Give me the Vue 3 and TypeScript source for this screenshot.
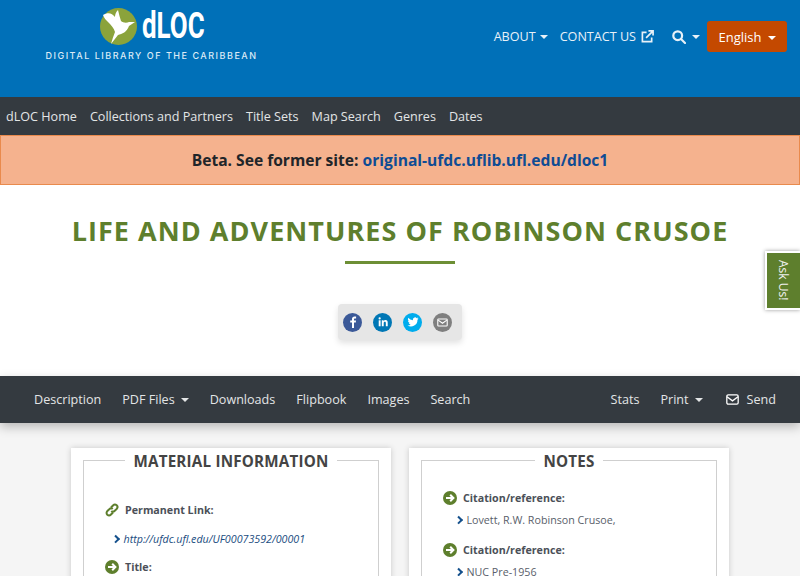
<template>
  <div class="page">
    <header class="top">
      <a class="logo">
        <div class="logo-mark">
          <svg width="37" height="37" viewBox="0 0 37 37">
            <circle cx="18.5" cy="18.5" r="18.5" fill="#8ba33b" />
            <path d="M3 7 C8 4 12 5 15 9 C15 6 16 4 18 2 C19 6 20 10 21 13 C23 15 27 15 29 14 L35 14 L29 18 C27 24 22 26 18 27 L11 36 C12 32 13.500 28 15 24 C14 20 11 17 8 14 C6 12 4 10 3 7 Z" fill="#fff" />
          </svg>
          <span class="logo-name">dLOC</span>
        </div>
        <div class="logo-sub">DIGITAL LIBRARY OF THE CARIBBEAN</div>
      </a>
      <nav class="top-links">
        <a class="top-link">ABOUT<i class="caret" /></a>
        <a class="top-link">CONTACT US
          <svg class="ext" width="13" height="13" viewBox="0 0 14 14" fill="none" stroke="#e8f1f8" stroke-width="1.800">
            <path d="M6 2.500H1.500V12.500H11.500V8" />
            <path d="M5.500 8.500L12.500 1.500M8 1H13V6" />
          </svg>
        </a>
        <a class="top-link search">
          <svg width="14" height="14" viewBox="0 0 14 14" fill="none" stroke="#e8f1f8" stroke-width="2.200">
            <circle cx="5.700" cy="5.700" r="4.400" />
            <path d="M9 9L13 13" stroke-linecap="round" />
          </svg>
          <i class="caret" />
        </a>
        <button class="lang">English<i class="caret" /></button>
      </nav>
    </header>

    <nav class="main-nav">
      <a v-for="l in mainLinks" :key="l">{{ l }}</a>
    </nav>

    <div class="beta">
      Beta. See former site:&nbsp;<a>original-ufdc.uflib.ufl.edu/dloc1</a>
    </div>

    <section class="title-area">
      <h1>LIFE AND ADVENTURES OF ROBINSON CRUSOE</h1>
      <div class="rule" />
      <div class="share">
        <span class="dot fb">
          <svg width="14" height="14" viewBox="0 0 14 14"><path d="M8 13V7.600H9.800L10 5.600H8V4.400C8 3.800 8.200 3.400 9 3.400H10.100V1.600C9.800 1.500 9.200 1.500 8.600 1.500C7 1.500 6 2.400 6 4.100V5.600H4.200V7.600H6V13Z" fill="#fff" /></svg>
        </span>
        <span class="dot li">
          <svg width="12" height="12" viewBox="0 0 14 14" fill="#fff"><rect x="2" y="5" width="2.200" height="7" /><circle cx="3.100" cy="2.900" r="1.300" /><path d="M5.600 5H7.700V6C8.100 5.300 8.900 4.800 9.900 4.800C11.900 4.800 12.500 6 12.500 8V12H10.300V8.400C10.300 7.500 10.100 6.800 9.200 6.800C8.200 6.800 7.800 7.500 7.800 8.400V12H5.600Z" /></svg>
        </span>
        <span class="dot tw">
          <svg width="12" height="12" viewBox="0 0 24 24"><path d="M23 5c-.8.4-1.700.6-2.600.7 1-.6 1.700-1.500 2-2.500-.9.500-1.900.9-2.900 1.100A4.500 4.500 0 0 0 11.800 8.400 12.900 12.900 0 0 1 2.500 3.700a4.500 4.500 0 0 0 1.400 6.100c-.7 0-1.400-.2-2-.6 0 2.200 1.500 4.100 3.600 4.500-.7.2-1.400.2-2 .1.600 1.800 2.300 3.100 4.200 3.100A9.100 9.100 0 0 1 1 18.800 12.900 12.900 0 0 0 20.900 7.300c.9-.6 1.600-1.400 2.100-2.300z" fill="#fff" /></svg>
        </span>
        <span class="dot em">
          <svg width="11" height="11" viewBox="0 0 14 14" fill="none" stroke="#fff" stroke-width="1.400"><rect x="1" y="2.500" width="12" height="9" rx="1" /><path d="M1.500 4L7 8L12.500 4" /></svg>
        </span>
      </div>
    </section>

    <nav class="item-nav">
      <div class="item-group">
        <a>Description</a>
        <a>PDF Files<i class="caret" /></a>
        <a>Downloads</a>
        <a>Flipbook</a>
        <a>Images</a>
        <a>Search</a>
      </div>
      <div class="item-group">
        <a>Stats</a>
        <a>Print<i class="caret" /></a>
        <a class="send">
          <svg width="13" height="11" viewBox="0 0 14 12" fill="none" stroke="#fff" stroke-width="1.400"><rect x="0.800" y="1" width="12.400" height="10" rx="1.500" /><path d="M1 3L7 7.500L13 3" /></svg>
          Send
        </a>
      </div>
    </nav>

    <main class="content">
      <section class="card">
        <div class="frame">
          <div class="legend"><span>MATERIAL INFORMATION</span></div>
          <div class="info-list first">
            <div class="label">
              <svg class="ico" width="14" height="14" viewBox="0 0 14 14" fill="none" stroke="#5e7f2d" stroke-width="2"><path d="M6 4.500L8 2.500C9 1.500 10.500 1.300 11.700 2.300C12.800 3.400 12.600 5 11.600 6L9.500 8C8.500 9 7.200 8.900 6.300 8" /><path d="M8 9.500L6 11.500C5 12.500 3.500 12.700 2.300 11.700C1.200 10.600 1.400 9 2.400 8L4.500 6C5.500 5 6.800 5.100 7.700 6" /></svg>
              Permanent Link:
            </div>
            <div class="value link"><i class="chev" /><a>http://ufdc.ufl.edu/UF00073592/00001</a></div>
            <div class="label">
              <svg class="ico" width="14" height="14" viewBox="0 0 14 14"><circle cx="7" cy="7" r="7" fill="#5e7f2d" /><path d="M3 7H10M7.200 3.800L10.400 7L7.200 10.200" fill="none" stroke="#fff" stroke-width="2" /></svg>
              Title:
            </div>
          </div>
        </div>
      </section>

      <section class="card">
        <div class="frame">
          <div class="legend"><span>NOTES</span></div>
          <div class="info-list">
            <template v-for="n in notes" :key="n">
              <div class="label">
                <svg class="ico" width="14" height="14" viewBox="0 0 14 14"><circle cx="7" cy="7" r="7" fill="#5e7f2d" /><path d="M3 7H10M7.200 3.800L10.400 7L7.200 10.200" fill="none" stroke="#fff" stroke-width="2" /></svg>
                Citation/reference:
              </div>
              <div class="value"><i class="chev" />{{ n }}</div>
            </template>
          </div>
        </div>
      </section>
    </main>

    <a class="ask"><span>Ask Us!</span></a>
  </div>
</template>

<script setup lang="ts">
const mainLinks: string[] = ['dLOC Home', 'Collections and Partners', 'Title Sets', 'Map Search', 'Genres', 'Dates']
const notes: string[] = ['Lovett, R.W. Robinson Crusoe,', 'NUC Pre-1956']
</script>

<style>
html, body { margin: 0; overflow: hidden; }
</style>

<style scoped>
.page {
  position: relative;
  height: 576px;
  overflow: hidden;
  font-family: "Open Sans", sans-serif;
  font-size: 12.600px;
  background: #f5f5f5;
  color: #343a40;
}

.caret {
  display: inline-block;
  margin-left: 6px;
  vertical-align: 2px;
  border-top: 4px solid currentColor;
  border-left: 4px solid transparent;
  border-right: 4px solid transparent;
}

.top {
  height: 97px;
  background: #0070b8;
  display: flex;
  justify-content: space-between;
  align-items: flex-start;
  box-sizing: border-box;
  padding: 8px 13px 0 45px;
}
.logo { display: flex; flex-direction: column; align-items: center; width: 213px; }
.logo-mark { display: flex; align-items: center; gap: 5px; height: 37px; margin-left: 1px; }
.logo-name {
  display: inline-block;
  font-family: "Roboto", sans-serif;
  font-weight: 700;
  font-size: 36px;
  line-height: 37px;
  color: #fff;
  width: 62px;
  transform: scaleX(0.72);
  transform-origin: left center;
}
.logo-sub {
  margin-top: 5px;
  font-family: "Inter", sans-serif;
  font-size: 9px;
  line-height: 12px;
  font-weight: 500;
  letter-spacing: 1.520px;
  color: #dcebf6;
  white-space: nowrap;
}

.top-links { display: flex; align-items: center; margin-top: 13px; color: #e8f1f8; }
.top-link { display: flex; align-items: center; font-size: 12.600px; white-space: nowrap; margin-right: 12px; height: 30px; }
.top-link .caret { margin-left: 4px; vertical-align: 0; }
.ext { margin-left: 5px; }
.search { margin-left: 6px; margin-right: 7px; }
.search .caret { margin-left: 6px; }
.lang {
  height: 31px;
  width: 80px;
  border: 0;
  border-radius: 3px;
  background: #c44900;
  color: #fff;
  font: 13px "Open Sans", sans-serif;
  padding: 0;
}

.main-nav {
  height: 38px;
  background: #343a40;
  display: flex;
  align-items: center;
  gap: 13px;
  padding-left: 6px;
  color: #e3e5e6;
  font-size: 12.600px;
}

.beta {
  height: 50px;
  box-sizing: border-box;
  background: #f5b28e;
  border: 1px solid #e98a4d;
  display: flex;
  align-items: center;
  justify-content: center;
  font-size: 15.600px;
  font-weight: 700;
  color: #212529;
}
.beta a { color: #0f4c94; }

.title-area {
  height: 191px;
  background: #fff;
  display: flex;
  flex-direction: column;
  align-items: center;
}
h1 {
  margin: 26px 0 0;
  font-size: 27px;
  line-height: 40px;
  font-weight: 700;
  letter-spacing: 1.050px;
  color: #5e7f2d;
  white-space: nowrap;
}
.rule { width: 110px; height: 3px; margin-top: 10px; background: #6d8f35; }
.share {
  margin-top: 40px;
  width: 124px;
  height: 36px;
  background: #e6e6e6;
  border-radius: 4px;
  box-shadow: 0 3px 6px rgba(0, 0, 0, 0.12);
  display: flex;
  align-items: center;
  gap: 11px;
  padding-left: 5px;
  box-sizing: border-box;
}
.dot { width: 19px; height: 19px; border-radius: 50%; display: flex; align-items: center; justify-content: center; }
.fb { background: #3b5998; }
.li { background: #0077b5; }
.tw { background: #00aced; }
.em { background: #7f7f7f; }

.item-nav {
  position: relative;
  height: 47px;
  background: #343a40;
  display: flex;
  justify-content: space-between;
  align-items: center;
  padding: 0 24px 0 34px;
  color: #e3e5e6;
  box-shadow: 0 4px 10px rgba(0, 0, 0, 0.25);
}
.item-group { display: flex; align-items: center; gap: 21px; }
.item-group a { white-space: nowrap; }
.send { display: flex; align-items: center; gap: 8px; margin-left: 2px; }

.content {
  display: flex;
  gap: 18px;
  padding: 25px 0 0 71px;
}
.card {
  width: 320px;
  height: 200px;
  box-sizing: border-box;
  padding: 12px 12px 0;
  background: #fff;
  box-shadow: 0 0 6px rgba(0, 0, 0, 0.18);
}
.frame { border: 1px solid #cfcfcf; border-bottom: 0; height: 200px; }
.legend { display: flex; justify-content: center; margin-top: -12px; height: 24px; }
.legend span {
  background: #fff;
  padding: 0 8px;
  font-size: 15.200px;
  line-height: 24px;
  font-weight: 700;
  letter-spacing: 0.200px;
  color: #444;
}
.info-list { padding: 15px 0 0 21px; font-size: 10.700px; }
.info-list.first { padding-top: 27px; }
.label { display: flex; align-items: center; gap: 6px; height: 20px; font-weight: 700; color: #4b5058; }
.value { display: flex; align-items: center; height: 20px; margin: 2px 0 10px 13px; color: #59606a; }
.value.link { margin: 9px 0 8px 8px; }
.value.link a { color: #1a4c80; font-style: italic; }
.chev {
  width: 3.500px;
  height: 3.500px;
  margin: 0 5px 0 0;
  border-top: 2px solid #14508c;
  border-right: 2px solid #14508c;
  transform: rotate(45deg);
}

.ask {
  position: absolute;
  top: 251px;
  right: 0;
  width: 35px;
  height: 59px;
  box-sizing: border-box;
  background: #5e7f2d;
  border: 2px solid #fff;
  border-right: 0;
  box-shadow: 0 0 4px rgba(0, 0, 0, 0.4);
  display: flex;
  align-items: center;
  justify-content: center;
  color: #f0f0f0;
  font-size: 12px;
}
.ask span { writing-mode: vertical-rl; white-space: nowrap; }
</style>
